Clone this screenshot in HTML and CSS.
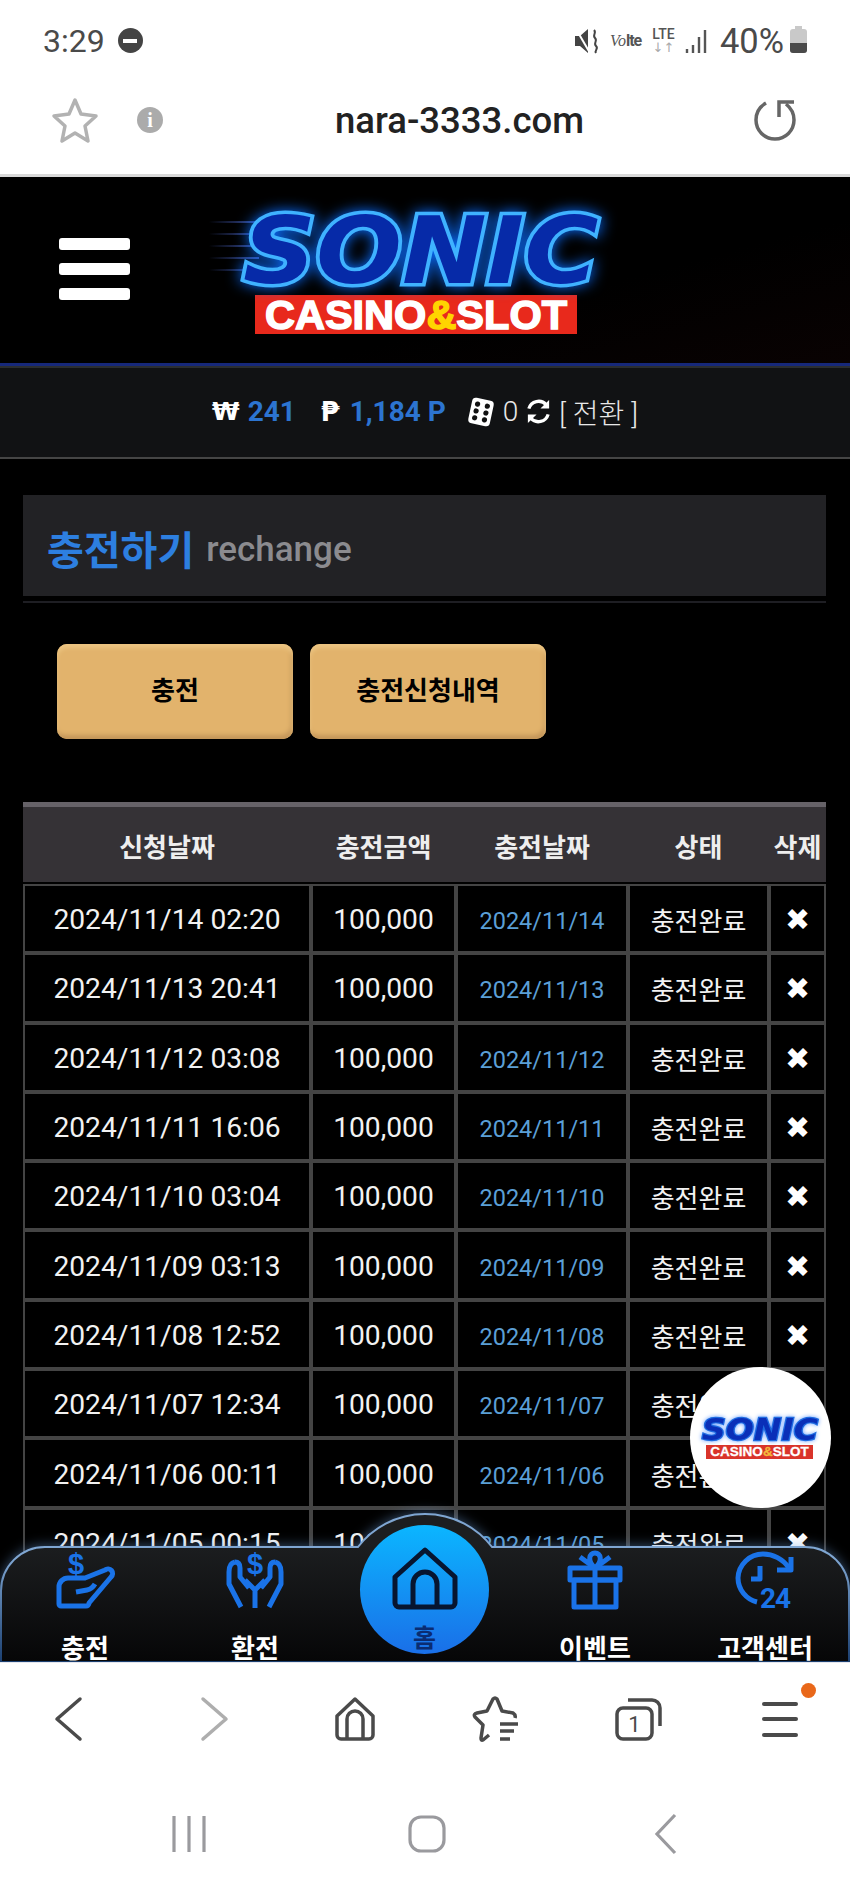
FILE: index.html
```html
<!DOCTYPE html>
<html>
<head lang="ko">
    <meta charset="UTF-8">
    <title>충전하기</title>
    <link rel="stylesheet" href="styles.css">
</head>
<body>
    <div id="phone">
        <div class="status-bar">
            <div class="status-left">
                <span class="clock">3:29</span>
                <span class="dnd"></span>
            </div>
            <div class="status-right">
                <svg class="ic-mute" viewBox="0 0 26 28" width="26" height="28">
                    <path d="M1 9h5l8-7v24l-8-7H1z" fill="#444"/>
                    <path d="M2 2l14 24" stroke="#fff" stroke-width="2"/>
                    <path d="M20 3c3 3-2 5 1 8s-2 5 1 8-2 4 0 7" fill="none" stroke="#444" stroke-width="2"/>
                </svg>
                <span class="volte"><i>Vo</i><b>lte</b></span>
                <span class="lte"><b>LTE</b><em>↓↑</em></span>
                <svg class="ic-signal" viewBox="0 0 22 26" width="22" height="26">
                    <path d="M2 21v4M8 17v8M14 9v16M20 2v23" stroke="#555" stroke-width="2.4"/>
                </svg>
                <span class="battery-text">40%</span>
                <span class="battery"><span class="battery-cap"></span><span class="battery-level"></span></span>
            </div>
        </div>

        <div class="url-bar">
            <svg class="ic-star" viewBox="0 0 46 46" width="46" height="46">
                <path d="M23 3l6 14 15 2-11 10 3 15-13-8-13 8 3-15L2 19l15-2z" fill="none" stroke="#b2b2b2" stroke-width="3.5" stroke-linejoin="round"/>
            </svg>
            <span class="info">i</span>
            <span class="url">nara-3333.com</span>
            <svg class="ic-reload" viewBox="0 0 44 44" width="44" height="44">
                <path d="M12 5C5 9 2 15 2 22a19 19 0 0 0 38 0c0-7-3-12-8-16" fill="none" stroke="#666" stroke-width="3.5"/>
                <path d="M40 4H25v15" fill="none" stroke="#666" stroke-width="3.5"/>
            </svg>
        </div>

        <div id="site">
            <div class="header">
                <div class="menu-btn"><span></span><span></span><span></span></div>
                <div class="logo">
                    <div class="speed"><i></i><i></i><i></i><i></i><i></i></div>
                    <div class="logo-name">SONIC</div>
                    <div class="logo-bar">CASINO<span>&amp;</span>SLOT</div>
                </div>
            </div>

            <div class="balance">
                <span class="cur">₩</span><span class="amt">241</span>
                <span class="cur cur-p">₱</span><span class="amt">1,184 P</span>
                <svg class="ic-dice" viewBox="0 0 28 32" width="28" height="32">
                    <g transform="rotate(12 14 16)">
                        <rect x="3" y="3" width="22" height="26" rx="4" fill="#fff"/>
                        <circle cx="9" cy="9" r="2.6" fill="#111"/><circle cx="19" cy="9" r="2.6" fill="#111"/>
                        <circle cx="9" cy="16" r="2.6" fill="#111"/><circle cx="19" cy="16" r="2.6" fill="#111"/>
                        <circle cx="9" cy="23" r="2.6" fill="#111"/><circle cx="19" cy="23" r="2.6" fill="#111"/>
                    </g>
                </svg>
                <span class="plain zero">0</span>
                <svg class="ic-sync" viewBox="0 0 28 28" width="27" height="27">
                    <path d="M4 11A10.500 10.500 0 0 1 22 7" fill="none" stroke="#fff" stroke-width="3.400"/>
                    <path d="M25 2v9h-9z" fill="#fff"/>
                    <path d="M24 17A10.500 10.500 0 0 1 6 21" fill="none" stroke="#fff" stroke-width="3.400"/>
                    <path d="M3 26v-9h9z" fill="#fff"/>
                </svg>
                <span class="plain">[ 전환 ]</span>
            </div>

            <div class="content">
                <div class="page-title">
                    <h2>충전하기</h2>
                    <span>rechange</span>
                </div>
                <div class="title-line"></div>

                <div class="tabs">
                    <a class="tab">충전</a>
                    <a class="tab">충전신청내역</a>
                </div>

                <table class="list">
                    <colgroup>
                        <col class="c1"><col class="c2"><col class="c3"><col class="c4"><col class="c5">
                    </colgroup>
                    <thead>
                        <tr><th>신청날짜</th><th>충전금액</th><th>충전날짜</th><th>상태</th><th>삭제</th></tr>
                    </thead>
                    <tbody>
                        <tr><td>2024/11/14 02:20</td><td>100,000</td><td class="day">2024/11/14</td><td class="state">충전완료</td><td class="del">✖</td></tr>
                        <tr><td>2024/11/13 20:41</td><td>100,000</td><td class="day">2024/11/13</td><td class="state">충전완료</td><td class="del">✖</td></tr>
                        <tr><td>2024/11/12 03:08</td><td>100,000</td><td class="day">2024/11/12</td><td class="state">충전완료</td><td class="del">✖</td></tr>
                        <tr><td>2024/11/11 16:06</td><td>100,000</td><td class="day">2024/11/11</td><td class="state">충전완료</td><td class="del">✖</td></tr>
                        <tr><td>2024/11/10 03:04</td><td>100,000</td><td class="day">2024/11/10</td><td class="state">충전완료</td><td class="del">✖</td></tr>
                        <tr><td>2024/11/09 03:13</td><td>100,000</td><td class="day">2024/11/09</td><td class="state">충전완료</td><td class="del">✖</td></tr>
                        <tr><td>2024/11/08 12:52</td><td>100,000</td><td class="day">2024/11/08</td><td class="state">충전완료</td><td class="del">✖</td></tr>
                        <tr><td>2024/11/07 12:34</td><td>100,000</td><td class="day">2024/11/07</td><td class="state">충전완료</td><td class="del">✖</td></tr>
                        <tr><td>2024/11/06 00:11</td><td>100,000</td><td class="day">2024/11/06</td><td class="state">충전완료</td><td class="del">✖</td></tr>
                        <tr><td>2024/11/05 00:15</td><td>100,000</td><td class="day">2024/11/05</td><td class="state">충전완료</td><td class="del">✖</td></tr>
                    </tbody>
                </table>
            </div>

            <div class="float-logo">
                <div class="logo logo-sm">
                    <div class="logo-name">SONIC</div>
                    <div class="logo-bar">CASINO<span>&amp;</span>SLOT</div>
                </div>
            </div>

            <div class="bottom-nav">
                <svg class="nav-shape" viewBox="0 0 850 161" width="850" height="161">
                    <defs>
                        <linearGradient id="navFill" x1="0" y1="0" x2="0" y2="1">
                            <stop offset="0.2" stop-color="#1c1e20"/>
                            <stop offset="1" stop-color="#060607"/>
                        </linearGradient>
                        <linearGradient id="navLine" x1="0" y1="0" x2="0" y2="1">
                            <stop offset="0.3" stop-color="#7fa6d2"/>
                            <stop offset="1" stop-color="#1b3f70"/>
                        </linearGradient>
                    </defs>
                    <path d="M1 161V90A44 44 0 0 1 45 46H358A84.500 84.500 0 0 1 492 46H805A44 44 0 0 1 849 90V161Z" fill="url(#navFill)" stroke="url(#navLine)" stroke-width="2"/>
                </svg>
                <div class="nav-items">
                    <a class="nav-item">
                        <svg viewBox="0 0 60 60" width="60" height="60">
                            <text x="21" y="24" class="dollar">$</text>
                            <path d="M4 54V37a9 9 0 0 1 9-9h17l20-8a4.500 4.500 0 0 1 6 7L34 53a3 3 0 0 1-3 3H6a2 2 0 0 1-2-2z" class="blue-line"/>
                            <path d="M21 42l11-2q5-1 8-6" class="blue-line"/>
                        </svg>
                        <span>충전</span>
                    </a>
                    <a class="nav-item">
                        <svg viewBox="0 0 56 60" width="56" height="60">
                            <text x="28" y="24" class="dollar">$</text>
                            <path d="M8 12C3 13 2 17 2 22V34L14 57M8 12c4 0 5 3 5 6V27L22 38" class="blue-line"/>
                            <path d="M48 12C53 13 54 17 54 22V34L42 57M48 12c-4 0-5 3-5 6V27L34 38" class="blue-line"/>
                            <path d="M28 58V40L18 30M28 40L38 30" class="blue-line"/>
                        </svg>
                        <span>환전</span>
                    </a>
                    <a class="nav-home">
                        <svg viewBox="0 0 66 64" width="66" height="64">
                            <path d="M33 3L63 30V56a4 4 0 0 1-4 4H7a4 4 0 0 1-4-4V30Z" class="home-line"/>
                            <path d="M21 60V37a12 12 0 0 1 24 0V60" class="home-line"/>
                        </svg>
                        <span>홈</span>
                    </a>
                    <a class="nav-item">
                        <svg viewBox="0 0 56 60" width="56" height="60">
                            <rect x="3" y="18" width="50" height="12" class="blue-line"/>
                            <rect x="7" y="30" width="42" height="27" class="blue-line"/>
                            <path d="M28 18V57M28 18C20 11 22 3 28 3S36 11 28 18M28 18L13 7M28 18L43 7" class="blue-line"/>
                        </svg>
                        <span>이벤트</span>
                    </a>
                    <a class="nav-item">
                        <svg viewBox="0 0 60 60" width="60" height="60">
                            <path d="M22 52A25 25 0 0 1 3 28A25 25 0 0 1 28 4C38 4 48 9 54 18" class="blue-line"/>
                            <path d="M56 7V20H42M25 16V29H16" class="blue-line"/>
                            <text x="25" y="58" class="num24">24</text>
                        </svg>
                        <span>고객센터</span>
                    </a>
                </div>
            </div>
        </div>

        <div class="toolbar">
            <svg viewBox="0 0 30 46" width="30" height="46" class="tb-back"><path d="M27 3L4 23L27 43" class="tb-line" stroke-linecap="round"/></svg>
            <svg viewBox="0 0 30 46" width="30" height="46" class="tb-next"><path d="M1 3L24 23L1 43" class="tb-line grey" stroke-linecap="round"/></svg>
            <svg viewBox="0 0 44 46" width="44" height="46" class="tb-home">
                <path d="M22 3L40 20V39a4 4 0 0 1-4 4H8a4 4 0 0 1-4-4V20Z" class="tb-line"/>
                <path d="M14 43V23a8 8 0 0 1 16 0V43" class="tb-line"/>
            </svg>
            <svg viewBox="0 0 48 48" width="48" height="48" class="tb-fav">
                <path d="M17 40L11 45Q9 46 9 43L11 30L3 22Q1 19 5 18L15 16L21 4Q23 2 25 4L30 16L41 18Q44 20 43 23" class="tb-line"/>
                <path d="M28 29H46M28 36H42M28 44H38" class="tb-line"/>
            </svg>
            <svg viewBox="0 0 48 44" width="48" height="44" class="tb-tabs">
                <rect x="2" y="11" width="35" height="31" rx="6" class="tb-line"/>
                <path d="M13 3H37a8 8 0 0 1 8 8V29" class="tb-line"/>
                <text x="19.500" y="35" class="tab-num">1</text>
            </svg>
            <div class="tb-menu"><span></span><span></span><span></span><i></i></div>
        </div>

        <div class="sys-nav">
            <svg class="sys-bars" viewBox="0 0 36 40" width="36" height="40"><path d="M3 2V38M18 2V38M33 2V38" class="sys-line"/></svg>
            <svg class="sys-home" viewBox="0 0 38 38" width="38" height="38"><rect x="2" y="2" width="34" height="34" rx="11" class="sys-line"/></svg>
            <svg class="sys-back" viewBox="0 0 24 42" width="24" height="42"><path d="M21 2L3 21L21 40" class="sys-line"/></svg>
        </div>
    </div>
</body>
</html>
```

FILE: styles.css
```css
*{
    margin: 0;
    padding: 0;
    box-sizing: border-box;
}
body{
    width: 850px;
    height: 1889px;
    overflow: hidden;
    background: #fff;
    font-family: Roboto, "Noto Sans CJK KR", sans-serif;
}
svg{
    overflow: visible;
}
#phone{
    width: 850px;
    height: 1889px;
    display: flex;
    flex-direction: column;
}

/* status bar */
.status-bar{
    height: 72px;
    padding: 9px 43px 0;
    display: flex;
    justify-content: space-between;
    align-items: center;
    color: #4a4a4a;
}
.status-left{
    display: flex;
    align-items: center;
    gap: 13px;
}
.clock{
    font-size: 32px;
}
.dnd{
    width: 25px;
    height: 25px;
    border-radius: 50%;
    background: #444;
    display: flex;
    align-items: center;
    justify-content: center;
}
.dnd:after{
    content: "";
    width: 14px;
    height: 4px;
    background: #fff;
}
.status-right{
    display: flex;
    align-items: center;
}
.volte{
    margin-left: 10px;
    width: 32px;
    font-size: 16px;
    color: #555;
    white-space: nowrap;
}
.volte i{
    font-family: "Liberation Serif", serif;
}
.volte b{
    letter-spacing: -1px;
}
.lte{
    margin-left: 8px;
    width: 27px;
    display: flex;
    flex-direction: column;
    align-items: center;
    line-height: 13px;
}
.lte b{
    font-size: 14px;
    font-weight: 500;
    color: #555;
}
.lte em{
    font-style: normal;
    font-size: 13px;
    color: #aaa;
    font-family: "DejaVu Sans", sans-serif;
}
.ic-signal{
    margin-left: 8px;
}
.battery-text{
    margin-left: 13px;
    font-size: 34.5px;
}
.battery{
    margin-left: 6px;
    width: 17px;
    height: 24px;
    background: #c9c9c9;
    border-radius: 3px;
    position: relative;
    display: flex;
    align-items: flex-end;
}
.battery-cap{
    position: absolute;
    top: -3px;
    left: 5px;
    width: 7px;
    height: 3px;
    background: #c9c9c9;
}
.battery-level{
    width: 100%;
    height: 10px;
    background: #4a4a4a;
    border-radius: 0 0 3px 3px;
}

/* url bar */
.url-bar{
    height: 105px;
    border-bottom: 3px solid #d9d9d9;
    padding: 0 52px 6px 52px;
    display: flex;
    align-items: center;
}
.info{
    margin-left: 39px;
    width: 26px;
    height: 26px;
    border-radius: 50%;
    background: #ababab;
    color: #fff;
    font: bold 20px/26px "Liberation Serif", serif;
    text-align: center;
}
.url{
    margin-left: 172px;
    font-size: 36.5px;
    font-weight: 500;
    color: #222;
}
.ic-reload{
    margin-left: auto;
}

/* site */
#site{
    height: 1485px;
    background: #000;
    position: relative;
    color: #fff;
}
.header{
    height: 186px;
    padding-left: 59px;
    display: flex;
    align-items: flex-start;
    background: linear-gradient(165deg, #000 65%, #090202 100%);
}
.menu-btn{
    width: 71px;
    margin-top: 61px;
    display: flex;
    flex-direction: column;
    gap: 13px;
}
.menu-btn span{
    height: 12px;
    border-radius: 3px;
    background: #fff;
}
.logo{
    position: relative;
    margin-left: 111px;
    margin-top: 36px;
    width: 366px;
}
.logo-name{
    font: italic bold 92px/78px "DejaVu Sans", sans-serif;
    height: 78px;
    margin-left: 2px;
    color: #062aa8;
    -webkit-text-stroke: 7px #3fb2ff;
    paint-order: stroke fill;
    filter: drop-shadow(0 0 7px #0a6cff);
    transform: scaleX(1.1);
    transform-origin: left center;
}
.logo-bar{
    width: 322px;
    height: 39px;
    margin: 4px 0 0 14px;
    background: #e8291c;
    color: #fff;
    font: bold 41.5px/40px "Liberation Sans", sans-serif;
    text-align: center;
    white-space: nowrap;
    -webkit-text-stroke: 1.5px #fff;
}
.logo-bar span{
    color: #ffd400;
    -webkit-text-stroke: 1.5px #ffd400;
}
.speed{
    position: absolute;
    left: -32px;
    top: 8px;
    width: 50px;
    display: flex;
    flex-direction: column;
    gap: 10px;
}
.speed i{
    height: 2px;
    background: linear-gradient(90deg, transparent, #3b4f9c);
}

/* balance */
.balance{
    height: 96px;
    border-top: 3px solid #16287a;
    border-bottom: 2px solid #454545;
    background: #111214;
    box-shadow: inset 0 2px 0 #2b2e31;
    display: flex;
    align-items: center;
    justify-content: center;
    font-size: 28px;
}
.cur{
    font-weight: bold;
    font-family: "DejaVu Sans", sans-serif;
    font-size: 25px;
}
.cur-p{
    margin-left: 25px;
    font-size: 27px;
}
.amt{
    margin-left: 8px;
    font-weight: bold;
    color: #2c74d0;
}
.cur-p + .amt{
    margin-left: 10px;
}
.ic-dice{
    margin-left: 21px;
}
.plain{
    color: #e8e8e8;
    font-weight: 300;
}
.zero{
    margin-left: 8px;
}
.ic-sync{
    margin: 0 7px;
}

/* content */
.content{
    padding: 36px 24px 0 23px;
}
.page-title{
    height: 101px;
    background: #222225;
    padding: 8px 24px 0 24px;
    display: flex;
    align-items: center;
    gap: 12px;
}
.page-title h2{
    font-size: 40px;
    font-weight: bold;
    color: #2d7fe0;
    padding-bottom: 4px;
}
.page-title span{
    font-size: 35px;
    font-weight: 500;
    color: #8b8b8f;
}
.title-line{
    margin-top: 5px;
    height: 2px;
    background: #1e1e23;
}
.tabs{
    margin: 41px 0 63px 34px;
    display: flex;
    gap: 17px;
}
.tab{
    width: 236px;
    height: 95px;
    border-radius: 10px;
    background: #e2b36c;
    box-shadow: inset 0 4px 4px #ecc583, inset -2px -4px 4px #c4965a;
    color: #000;
    font-size: 26px;
    font-weight: bold;
    line-height: 95px;
    text-align: center;
}

/* list */
.list{
    width: 803px;
    table-layout: fixed;
    border-collapse: separate;
    border-spacing: 0;
}
.c1{ width: 288px; }
.c2{ width: 145px; }
.c3{ width: 172px; }
.c4{ width: 141px; }
.c5{ width: 57px; }
.list th{
    height: 80px;
    border-top: 5px solid #666268;
    background: #353236;
    font-size: 26px;
    font-weight: bold;
    color: #eee;
    box-shadow: 0 2px 0 #0c0c0c;
    padding-top: 2px;
}
.list thead tr{
    height: 82px;
}
.list td{
    height: 69.3px;
    border: 2px solid #444;
    background: #000;
    text-align: center;
    font-size: 28.2px;
    color: #f2f2f2;
    padding-top: 2px;
}
.list thead th{
    border-bottom: 2px solid #000;
}
.list td.day{
    padding-top: 5px;
    font-size: 23.5px;
    color: #5b9fd6;
}
.list td.state{
    font-size: 26px;
}
.list td.del{
    font-family: "DejaVu Sans", sans-serif;
    font-size: 30px;
    color: #fff;
}

/* floating logo */
.float-logo{
    position: absolute;
    left: 690px;
    top: 1190px;
    width: 141px;
    height: 141px;
    border-radius: 50%;
    background: #fff;
    padding: 50px 0 0 12px;
}
.logo-sm{
    margin: 0;
    width: 122px;
}
.logo-sm .logo-name{
    font-size: 30px;
    line-height: 26px;
    height: 26px;
    margin-left: 0;
    color: #0a2fb8;
    -webkit-text-stroke: 2.4px #1e6be0;
    filter: drop-shadow(0 0 2px #6aa0ff);
}
.logo-sm .logo-bar{
    width: 107px;
    height: 14px;
    margin: 2px 0 0 4px;
    font-size: 13.5px;
    line-height: 14px;
    -webkit-text-stroke: 0.3px #fff;
    background: #d9342a;
}
.logo-sm .logo-bar span{
    color: #f4b93a;
    -webkit-text-stroke: 0.3px #f4b93a;
}

/* bottom nav */
.bottom-nav{
    position: absolute;
    left: 0;
    bottom: 0;
    width: 850px;
    height: 161px;
}
.nav-shape{
    position: absolute;
    left: 0;
    top: 0;
    filter: drop-shadow(0 -1px 6px rgba(110, 160, 220, 0.45));
}
.nav-items{
    position: relative;
    height: 161px;
    padding-top: 49px;
    display: grid;
    grid-template-columns: repeat(5, 170px);
}
.nav-item{
    display: flex;
    flex-direction: column;
    align-items: center;
    height: 112px;
    color: #fff;
    font-size: 26px;
    font-weight: bold;
    line-height: 30px;
}
.nav-item svg{
    flex: none;
}
.nav-item span{
    margin-top: 23.5px;
}
.nav-home{
    width: 129px;
    height: 129px;
    margin: -25px 0 0 20px;
    border-radius: 50%;
    background: linear-gradient(#0bb6ff, #1a6fe8);
    padding-top: 22px;
    display: flex;
    flex-direction: column;
    align-items: center;
    color: #0a2c72;
    font-size: 25px;
    font-weight: bold;
    line-height: 28px;
}
.nav-home svg{
    flex: none;
}
.nav-home span{
    margin-top: 14px;
}
.blue-line{
    fill: none;
    stroke: #1a73e8;
    stroke-width: 5;
    stroke-linejoin: round;
}
.home-line{
    fill: none;
    stroke: #071530;
    stroke-width: 5;
    stroke-linejoin: round;
}
.dollar{
    fill: #1a73e8;
    font: bold 29px "Liberation Sans", sans-serif;
    text-anchor: middle;
}
.num24{
    fill: #1a73e8;
    font: bold 28px Roboto, sans-serif;
    letter-spacing: -1px;
}

/* browser toolbar */
.toolbar{
    height: 113px;
    position: relative;
    background: #fff;
    border-top: 1px solid #e4e6ee;
    display: flex;
    align-items: center;
}
.tb-back{ margin-left: 53px; }
.tb-next{ margin-left: 119px; }
.tb-home{ margin-left: 101px; }
.tb-fav{ margin-left: 95px; }
.tb-tabs{ margin-left: 95px; }
.tb-line{
    fill: none;
    stroke: #4a4a4a;
    stroke-width: 3.5;
    stroke-linejoin: round;
}
.tb-line.grey{
    stroke: #aeaeae;
}
.tab-num{
    fill: #4a4a4a;
    font: 22px Roboto, sans-serif;
    text-anchor: middle;
}
.tb-menu{
    position: relative;
    margin-left: 99px;
    width: 36px;
    display: flex;
    flex-direction: column;
    gap: 11.5px;
}
.tb-menu span{
    height: 4px;
    border-radius: 2px;
    background: #4a4a4a;
}
.tb-menu i{
    position: absolute;
    right: -18px;
    top: -19px;
    width: 15px;
    height: 15px;
    border-radius: 50%;
    background: #e9681a;
}

/* system nav */
.sys-nav{
    height: 114px;
    padding: 4px 0 0 171px;
    display: flex;
    align-items: center;
}
.sys-home{ margin-left: 201px; }
.sys-back{ margin-left: 208px; }
.sys-line{
    fill: none;
    stroke: #9a9a9e;
    stroke-width: 3.2;
}
```
